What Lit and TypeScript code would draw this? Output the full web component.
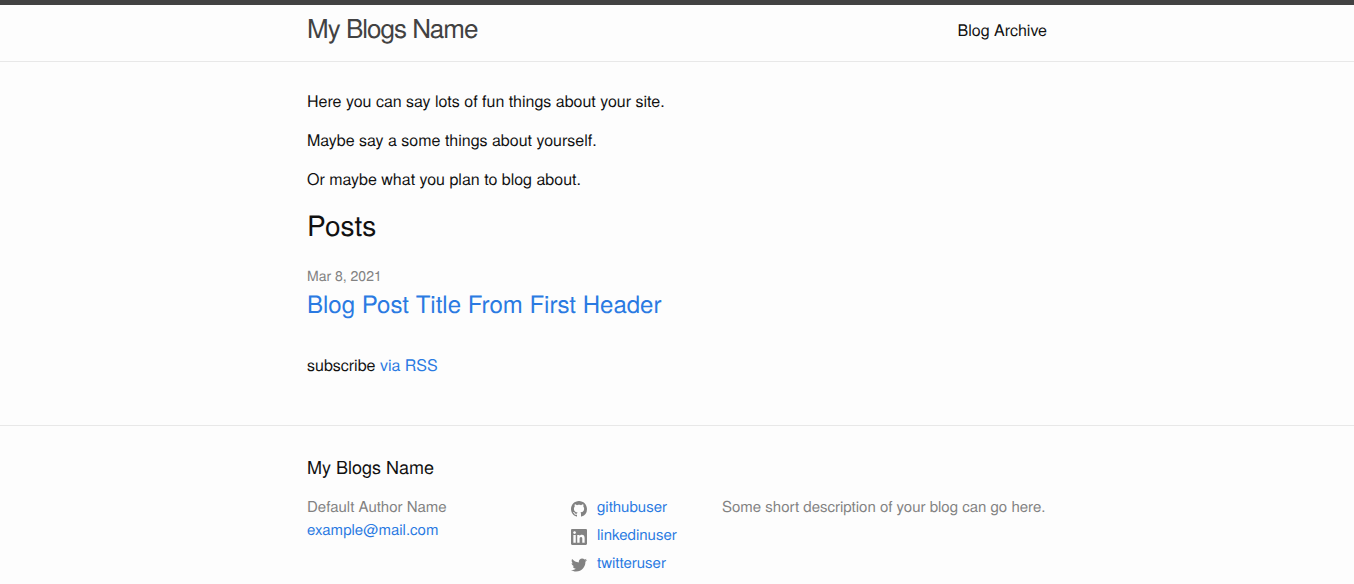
import { LitElement, html, css, svg } from "lit";
import { customElement } from "lit/decorators.js";

const icons = {
  github: svg`<path fill-rule="evenodd" d="M8 0C3.58 0 0 3.58 0 8c0 3.54 2.29 6.53 5.47 7.59.4.07.55-.17.55-.38 0-.19-.01-.82-.01-1.49-2.01.37-2.53-.49-2.69-.94-.09-.23-.48-.94-.82-1.13-.28-.15-.68-.52-.01-.53.63-.01 1.08.58 1.23.82.72 1.21 1.87.87 2.33.66.07-.52.28-.87.51-1.07-1.78-.2-3.64-.89-3.64-3.95 0-.87.31-1.59.82-2.15-.08-.2-.36-1.02.08-2.12 0 0 .67-.21 2.2.82.64-.18 1.32-.27 2-.27.68 0 1.36.09 2 .27 1.53-1.04 2.2-.82 2.2-.82.44 1.1.16 1.92.08 2.12.51.56.82 1.27.82 2.15 0 3.07-1.87 3.75-3.65 3.95.29.25.54.73.54 1.48 0 1.07-.01 1.93-.01 2.2 0 .21.15.46.55.38A8.013 8.013 0 0016 8c0-4.42-3.58-8-8-8z"/>`,
  linkedin: svg`<path d="M13.632 13.635h-2.37V9.922c0-.886-.018-2.025-1.234-2.025-1.235 0-1.424.964-1.424 1.96v3.778h-2.37V6H8.51v1.04h.03c.318-.6 1.092-1.233 2.247-1.233 2.4 0 2.845 1.58 2.845 3.637v4.188zM3.558 4.955c-.762 0-1.376-.617-1.376-1.377 0-.758.614-1.375 1.376-1.375.76 0 1.376.617 1.376 1.375 0 .76-.617 1.377-1.376 1.377zm1.188 8.68H2.37V6h2.376v7.635zM14.816 0H1.18C.528 0 0 .516 0 1.153v13.694C0 15.484.528 16 1.18 16h13.635c.652 0 1.185-.516 1.185-1.153V1.153C16 .516 15.467 0 14.815 0z"/>`,
  twitter: svg`<path d="M16 3.038c-.59.26-1.22.437-1.885.517.677-.407 1.198-1.05 1.443-1.816-.634.37-1.337.64-2.085.79-.598-.64-1.45-1.04-2.396-1.04-1.812 0-3.282 1.47-3.282 3.28 0 .26.03.51.085.75-2.728-.13-5.147-1.44-6.766-3.42C.83 2.58.67 3.14.67 3.75c0 1.14.58 2.143 1.46 2.732-.538-.017-1.045-.165-1.487-.41v.04c0 1.59 1.13 2.918 2.633 3.22-.276.074-.566.114-.865.114-.21 0-.416-.02-.617-.058.418 1.304 1.63 2.253 3.067 2.28-1.124.88-2.54 1.404-4.077 1.404-.265 0-.526-.015-.783-.045 1.453.93 3.178 1.474 5.032 1.474 6.038 0 9.34-5 9.34-9.338 0-.143-.004-.284-.01-.425.64-.463 1.198-1.04 1.638-1.7z"/>`,
};

const accounts = [
  { icon: icons.github, name: "githubuser", href: "#github" },
  { icon: icons.linkedin, name: "linkedinuser", href: "#linkedin" },
  { icon: icons.twitter, name: "twitteruser", href: "#twitter" },
];

const posts = [{ date: "Mar 8, 2021", title: "Blog Post Title From First Header", href: "#post" }];

@customElement("app-root")
export class AppRoot extends LitElement {
  static styles = css`
    :host {
      display: flex;
      flex-direction: column;
      min-height: 100vh;
      background: #fdfdfd;
      color: #111;
      font: 16px/24px "TeX Gyre Heros", "Helvetica Neue", Helvetica, "Liberation Sans", Arial, sans-serif;
      font-kerning: normal;
      text-rendering: geometricPrecision;
    }
    h1, h2, h3, p, ul { margin: 0; padding: 0; font-weight: 400; }
    ul { list-style: none; }
    a { color: #2a7ae2; text-decoration: none; }
    a:hover { color: #111; text-decoration: underline; }
    .wrapper {
      box-sizing: border-box;
      max-width: 800px;
      margin: 0 auto;
      padding: 0 30px;
    }
    .header { border-top: 5px solid #424242; border-bottom: 1px solid #e8e8e8; }
    .bar { display: flex; justify-content: space-between; min-height: 56px; line-height: 50px; }
    .brand, .brand:hover { color: #424242; font-size: 26px; letter-spacing: -1px; line-height: 46px; }
    .nav a { color: #111; }
    .content { flex: 1; padding: 27px 0 48px; }
    .intro p { margin-bottom: 15px; }
    .heading { font-size: 28px; line-height: 36px; margin-bottom: 21px; }
    .posts { margin-bottom: 34px; }
    .date { display: block; color: #828282; font-size: 14px; line-height: 24px; }
    .title { font-size: 24px; line-height: 32px; }
    .footer { border-top: 1px solid #e8e8e8; padding: 30px 0; }
    .name { font-size: 18px; line-height: 22px; margin-bottom: 17px; }
    .columns {
      display: grid;
      grid-template-columns: 264px 151px 1fr;
      color: #828282;
      font-size: 15px;
      line-height: 23px;
    }
    .social li { display: flex; gap: 10px; height: 28px; }
    .icon { width: 16px; height: 16px; margin-top: 6px; fill: #828282; }
    @media (max-width: 760px) {
      .columns { grid-template-columns: 1fr; gap: 15px; }
    }
  `;

  render() {
    return html`
      <header class="header">
        <div class="wrapper bar">
          <a class="brand" href="#home">My Blogs Name</a>
          <nav class="nav"><a href="#archive">Blog Archive</a></nav>
        </div>
      </header>
      <main class="content">
        <div class="wrapper">
          <div class="intro">
            <p>Here you can say lots of fun things about your site.</p>
            <p>Maybe say a some things about yourself.</p>
            <p>Or maybe what you plan to blog about.</p>
          </div>
          <h2 class="heading">Posts</h2>
          <ul class="posts">
            ${posts.map((p) => html`<li>
              <span class="date">${p.date}</span>
              <h3 class="title"><a href=${p.href}>${p.title}</a></h3>
            </li>`)}
          </ul>
          <p>subscribe <a href="#feed">via RSS</a></p>
        </div>
      </main>
      <footer class="footer">
        <div class="wrapper">
          <h2 class="name">My Blogs Name</h2>
          <div class="columns">
            <ul>
              <li>Default Author Name</li>
              <li><a href="mailto:example@mail.com">example@mail.com</a></li>
            </ul>
            <ul class="social">
              ${accounts.map((a) => html`<li>
                <svg class="icon" viewBox="0 0 16 16" aria-hidden="true">${a.icon}</svg>
                <a href=${a.href}>${a.name}</a>
              </li>`)}
            </ul>
            <p>Some short description of your blog can go here.</p>
          </div>
        </div>
      </footer>
    `;
  }
}
